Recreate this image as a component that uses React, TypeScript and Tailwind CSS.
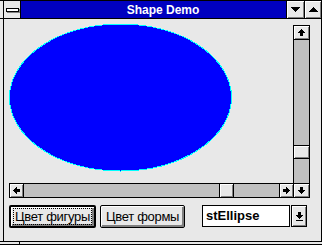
type Dir = 'up' | 'down' | 'left' | 'right'

const rot: Record<Dir, string> = { up: 'rotate(0 3.5 3.5)', down: 'rotate(180 3.5 3.5)', left: 'rotate(-90 3.5 3.5)', right: 'rotate(90 3.5 3.5)' }

function Arrow({ dir }: { dir: Dir }) {
  return (
    <svg width="7" height="7" viewBox="0 0 7 7" shapeRendering="crispEdges">
      <polygon points="3.5,0 7,4 5,4 5,7 2,7 2,4 0,4" fill="#000" transform={rot[dir]} />
    </svg>
  )
}

function Tri({ up }: { up?: boolean }) {
  return (
    <svg width="9" height="5" viewBox="0 0 9 5" shapeRendering="crispEdges">
      <polygon points={up ? '4.5,0 9,5 0,5' : '0,0 9,0 4.5,5'} fill="#000" />
    </svg>
  )
}

const face = 'bg-[#e8e8e8] shadow-[inset_1px_1px_0_#fff,inset_-1px_-1px_0_#808080] flex items-center justify-center'

export default function App() {
  return (
    <div className="w-[322px] h-[245px] bg-[#e8e8e8] flex flex-col overflow-hidden font-['Liberation_Sans',Arial,sans-serif] text-black">
      {/* caption */}
      <div className="h-[19px] border-y border-black flex shrink-0">
        <div className="w-[3px]" />
        <div className="w-[18px] border-x border-black flex items-center justify-center">
          <div className="w-[13px] h-[4px] border border-black bg-white shadow-[1px_1px_0_#808080]" />
        </div>
        <div className="flex-1 bg-[#0000c0] text-white text-[12px] font-bold flex items-center justify-center pl-[19px] leading-none">
          Shape Demo
        </div>
        <div className={'w-[18px] border-l border-black ' + face}>
          <Tri />
        </div>
        <div className={'w-[18px] border-x border-black ' + face}>
          <Tri up />
        </div>
      </div>

      {/* body */}
      <div className="flex-1 flex">
        <div className="w-[3px]" />
        <div className="flex-1 border-x border-black flex flex-col pt-[6px] pl-[5px]">
          <div className="flex">
            <div className="w-[285px] flex flex-col">
              <div className="h-[158px]">
                <svg width="224" height="148" className="block overflow-visible -mt-[1px]" shapeRendering="crispEdges">
                  <ellipse cx="111.5" cy="73.5" rx="111" ry="73.5" fill="#0000ff" stroke="#00ffff" strokeWidth="1" />
                </svg>
              </div>
              <div className="h-[15px] border border-black bg-[#c0c0c0] flex">
                <div className={'w-[14px] border-r border-black ' + face}>
                  <Arrow dir="left" />
                </div>
                <div className="flex-1 flex">
                  <div className="w-[195px]" />
                  <div className="w-[15px] border-x border-black bg-[#e8e8e8] shadow-[inset_1px_1px_0_#fff,inset_-1px_-1px_0_#808080]" />
                </div>
                <div className={'w-[14px] border-l border-black ' + face}>
                  <Arrow dir="right" />
                </div>
              </div>
            </div>
            <div className="w-[17px] h-[173px] -ml-px border border-black bg-[#c0c0c0] flex flex-col">
              <div className={'h-[14px] border-b border-black ' + face}>
                <Arrow dir="up" />
              </div>
              <div className="flex-1 flex flex-col">
                <div className="h-[105px]" />
                <div className="h-[14px] border-y border-black bg-[#e8e8e8] shadow-[inset_1px_1px_0_#fff,inset_-1px_-1px_0_#808080]" />
              </div>
              <div className={'h-[14px] border-t border-black ' + face}>
                <Arrow dir="down" />
              </div>
            </div>
          </div>

          {/* controls */}
          <div className="flex items-start mt-[7px] text-[13px]">
            <button type="button" className="w-[87px] h-[23px] border-2 border-black rounded-[2px] bg-[#e8e8e8] shadow-[inset_1px_1px_0_#fff,inset_-2px_-2px_0_#808080] flex items-center justify-center tracking-[-0.3px]">
              <span className="border border-dotted border-black px-[1px] leading-[15px]">Цвет фигуры</span>
            </button>
            <button type="button" className="w-[85px] h-[23px] ml-[4px] border border-black rounded-[2px] bg-[#e8e8e8] shadow-[inset_1px_1px_0_#fff,inset_-2px_-2px_0_#808080] flex items-center justify-center tracking-[-0.3px]">
              Цвет формы
            </button>
            <div className="w-[88px] h-[22px] ml-[17px] border border-black bg-white flex items-center pl-[3px] font-bold">
              stEllipse
            </div>
            <div className={'w-[16px] h-[22px] ml-[1px] border border-black flex-col gap-[1px] ' + face}>
              <Arrow dir="down" />
              <div className="w-[7px] h-[1px] bg-black" />
            </div>
          </div>
        </div>
      </div>

      {/* bottom frame */}
      <div className="h-[4px] border-y border-black shrink-0 flex">
        <div className="w-[20px] border-r border-black" />
      </div>
    </div>
  )
}
